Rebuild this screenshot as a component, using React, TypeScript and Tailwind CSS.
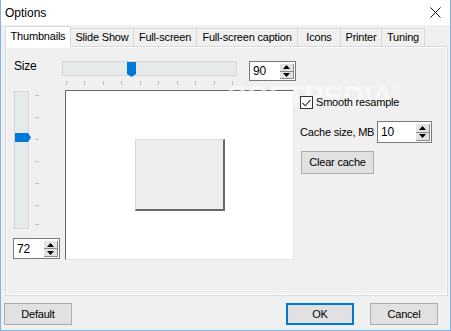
import React from "react";

function Arrow({ up }: { up: boolean }) {
  return (
    <svg width="7" height="4" viewBox="0 0 7 4">
      <polygon points={up ? "0,4 3.5,0 7,4" : "0,0 7,0 3.5,4"} fill="#000" />
    </svg>
  );
}

function Spin({ value, cls }: { value: string; cls: string }) {
  return (
    <div className={`flex bg-white border border-[#7a7a7a] ${cls}`}>
      <div className="flex-1 pl-[3px] flex items-center text-[12px] leading-none text-black">{value}</div>
      <div className="flex flex-col w-[15px] my-[1px] mr-[1px] border-l border-t border-white">
        <div className="flex-1 flex items-center justify-center bg-[#e3e3e3] border-b border-r border-[#8a8a8a]">
          <Arrow up />
        </div>
        <div className="flex-1 flex items-center justify-center bg-[#e3e3e3] border-r border-b border-[#8a8a8a]">
          <Arrow up={false} />
        </div>
      </div>
    </div>
  );
}

const tabs = [
  { label: "Thumbnails", w: "w-[66px]" },
  { label: "Slide Show", w: "w-[64px]" },
  { label: "Full-screen", w: "w-[64px]" },
  { label: "Full-screen caption", w: "w-[102px]" },
  { label: "Icons", w: "w-[44px]" },
  { label: "Printer", w: "w-[42px]" },
  { label: "Tuning", w: "w-[44px]" },
];

export default function App() {
  const hTicks = Array.from({ length: 10 });
  const vTicks = [4, 26, 48, 70, 92, 114, 133];
  return (
    <div className="relative w-[451px] h-[331px] overflow-hidden bg-[#f0f0f0] border-l border-r border-b border-[#7eb4ea] font-['Liberation_Sans',Arial,sans-serif] text-[11px] text-black tracking-[-0.2px]">
      {/* watermark */}
      <div className="absolute left-[226px] top-[82px] pointer-events-none text-[29px] font-bold text-white/60 tracking-normal leading-none z-0">
        SOFTPEDIA<span className="text-[10px] align-top">®</span>
      </div>

      {/* title bar */}
      <div className="h-[25px] bg-white flex items-center justify-between pl-[4px] pr-[9px] relative z-10">
        <span className="text-[12px] tracking-normal">Options</span>
        <svg width="11" height="11" viewBox="0 0 11 11">
          <line x1="0.5" y1="0.5" x2="10.5" y2="10.5" stroke="#111" strokeWidth="1" />
          <line x1="10.5" y1="0.5" x2="0.5" y2="10.5" stroke="#111" strokeWidth="1" />
        </svg>
      </div>

      {/* tabs */}
      <div className="mt-[1px] ml-[4px] h-[20px] flex items-end relative z-10">
        {tabs.map((t, i) =>
          i === 0 ? (
            <div
              key={t.label}
              className={`${t.w} h-[21px] mb-[-1px] relative z-10 bg-white border-l border-t border-r border-[#d9d9d9] flex items-center justify-center pb-[2px]`}
            >
              {t.label}
            </div>
          ) : (
            <div
              key={t.label}
              className={`${t.w} h-[18px] -ml-px bg-[#f0f0f0] border-l border-t border-r border-[#d9d9d9] flex items-center justify-center`}
            >
              {t.label}
            </div>
          )
        )}
      </div>

      {/* panel */}
      <div className="ml-[4px] w-[443px] h-[250px] border border-[#d9d9d9]">
        <div className="h-full border border-white bg-[#f0f0f0]">
          {/* row 1 */}
          <div className="mt-[11px] h-[31px] flex items-start">
            <div className="ml-[7px] w-[48px] leading-[13px] mt-[1px] text-[12px]">Size</div>
            <div className="relative mt-[2px] w-[175px]">
              <div className="h-[15px] bg-[#e7eaea] border border-[#d6d6d6]" />
              <div className="mt-[5px] h-[4px] px-[4px] flex justify-between">
                {hTicks.map((_, i) => (
                  <div key={i} className="w-px h-[4px] bg-[#bdbdbd]" />
                ))}
              </div>
              <svg className="absolute left-[65px] top-[1px]" width="9" height="15" viewBox="0 0 9 15">
                <polygon points="0,0 9,0 9,12 4.5,15 0,12" fill="#0078d7" />
              </svg>
            </div>
            <Spin value="90" cls="ml-[12px] mt-[2px] w-[47px] h-[20px]" />
          </div>

          {/* row 2 */}
          <div className="flex items-start">
            <div className="ml-[6px] w-[52px] flex flex-col">
              <div className="ml-[1px] mt-[1px] flex">
                <div className="relative w-[15px] h-[138px] bg-[#e7eaea] border border-[#d6d6d6]">
                  <svg className="absolute left-0 top-[41px]" width="16" height="9" viewBox="0 0 16 9">
                    <polygon points="0,0 13,0 16,4.5 13,9 0,9" fill="#0078d7" />
                  </svg>
                </div>
                <svg className="ml-[6px]" width="4" height="138" viewBox="0 0 4 138">
                  {vTicks.map((y) => (
                    <rect key={y} x="0" y={y} width="4" height="1" fill="#bdbdbd" />
                  ))}
                </svg>
              </div>
              <Spin value="72" cls="mt-[9px] w-[47px] h-[21px]" />
            </div>

            <div className="w-[229px] h-[170px] bg-white border-l border-t border-[#696969] border-r border-b border-r-[#e3e3e3] border-b-[#e3e3e3] flex items-center justify-center">
              <div className="w-[90px] h-[72px] bg-[#eeeeee] border-l border-t border-[#dadada] border-r-2 border-b-2 border-r-[#696969] border-b-[#696969]" />
            </div>

            <div className="ml-[6px] flex flex-col relative z-10">
              <div className="mt-[6px] h-[13px] flex items-center">
                <div className="w-[13px] h-[13px] bg-white border border-[#333] flex items-center justify-center">
                  <svg width="9" height="8" viewBox="0 0 9 8">
                    <polyline points="0.5,4 3.3,6.8 8.5,0.8" fill="none" stroke="#333" strokeWidth="1.1" />
                  </svg>
                </div>
                <span className="ml-[3px] leading-[13px] whitespace-nowrap">Smooth resample</span>
              </div>
              <div className="mt-[12px] flex items-center">
                <span className="w-[77px] whitespace-nowrap leading-[13px]">Cache size, MB</span>
                <Spin value="10" cls="w-[55px] h-[22px]" />
              </div>
              <div className="mt-[8px] ml-[1px] w-[73px] h-[23px] bg-[#e1e1e1] border border-[#adadad] flex items-center justify-center">
                Clear cache
              </div>
            </div>
          </div>
        </div>
      </div>

      {/* bottom buttons */}
      <div className="mt-[7px] flex">
        <div className="ml-[3px] w-[68px] h-[22px] bg-[#e1e1e1] border border-[#adadad] flex items-center justify-center">
          Default
        </div>
        <div className="ml-[214px] w-[68px] h-[22px] bg-[#e1e1e1] border-2 border-[#0078d7] flex items-center justify-center">
          OK
        </div>
        <div className="ml-[16px] w-[68px] h-[22px] bg-[#e1e1e1] border border-[#adadad] flex items-center justify-center">
          Cancel
        </div>
      </div>
    </div>
  );
}
